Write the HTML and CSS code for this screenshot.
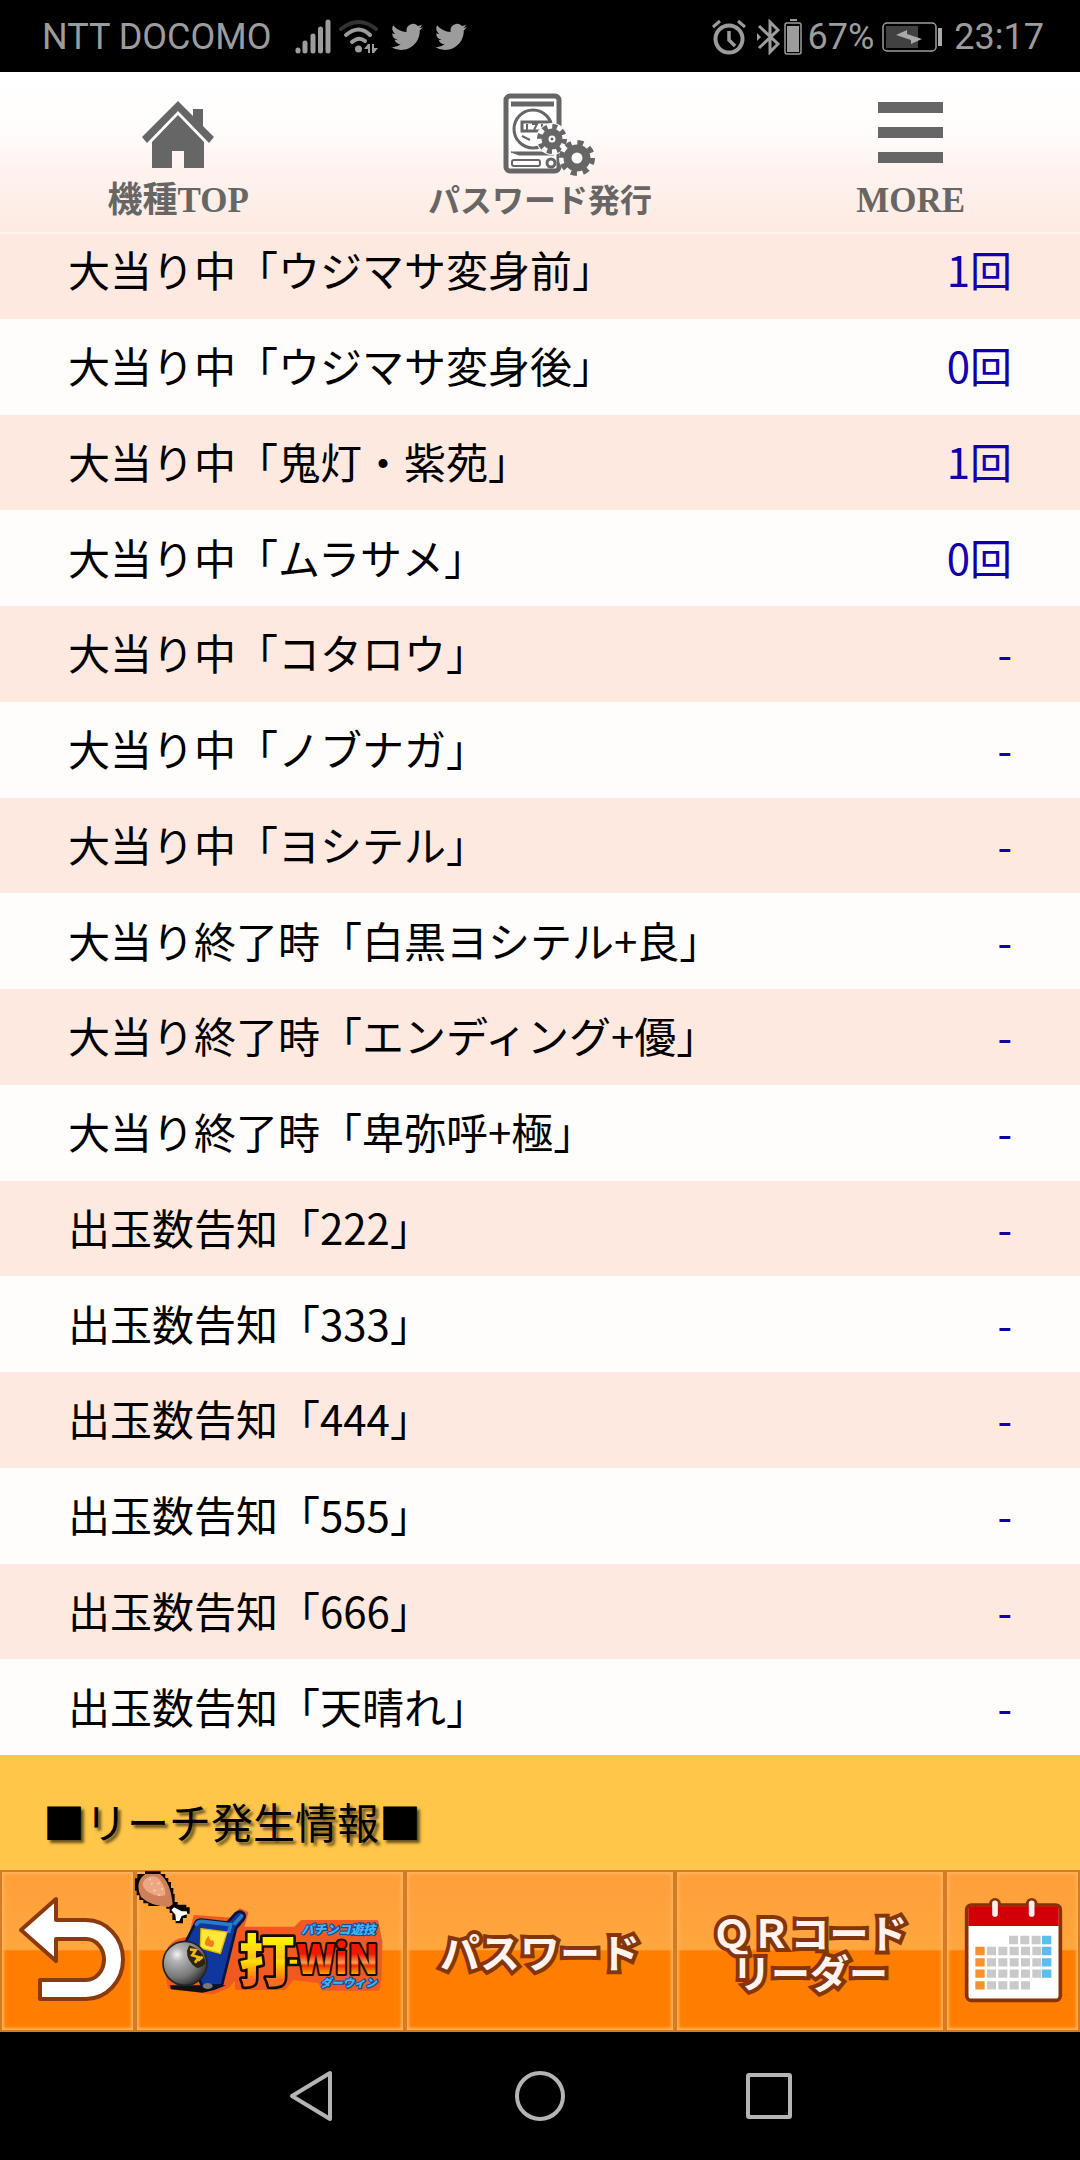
FILE: index.html
```html
<!DOCTYPE html>
<html lang="ja">
<head>
<meta charset="utf-8">
<meta name="viewport" content="width=device-width">
<title>打-WIN</title>
<link rel="stylesheet" href="styles.css">
</head>
<body>
<div class="status">
  <span class="carrier">NTT DOCOMO</span>
  <svg class="signal" width="36" height="36" viewBox="0 0 36 36" stroke="#9c9c9c" stroke-width="5" stroke-linecap="round"><path d="M3 31v1M10 24v8M18 17v15M25.500 10v22M33 3v29"/></svg>
  <svg class="wifi" width="40" height="36" viewBox="0 0 40 36" fill="none" stroke="#9c9c9c" stroke-width="4" stroke-linecap="round"><path stroke="#333" d="M2 10Q20-4 37 10"/><path d="M7 16Q20 5 31 16M13 23Q20 17 26 22"/><circle cx="19.500" cy="30" r="3.500" fill="#9c9c9c" stroke="none"/><path fill="#9c9c9c" stroke="none" d="M25 30l4-5h2v9h-2v-4zM33 25h2v4h4l-4 5h-2z"/></svg>
  <svg class="bird" width="32" height="28" viewBox="0 2 24 20" fill="#9c9c9c"><path d="M23.950 4.570a10 10 0 0 1-2.820.770 4.960 4.960 0 0 0 2.160-2.720c-.950.550-2 .950-3.130 1.180a4.920 4.920 0 0 0-8.380 4.480C7.690 8.090 4.070 6.130 1.640 3.160a4.920 4.920 0 0 0 1.520 6.570 4.900 4.900 0 0 1-2.230-.610v.060a4.920 4.920 0 0 0 3.950 4.830 5 5 0 0 1-2.210.080 4.940 4.940 0 0 0 4.600 3.420A9.870 9.870 0 0 1 0 19.540a13.990 13.990 0 0 0 7.550 2.210c9.050 0 14-7.500 14-13.980 0-.210 0-.420-.020-.630a9.940 9.940 0 0 0 2.460-2.550z"/></svg>
  <svg class="bird" width="32" height="28" viewBox="0 2 24 20" fill="#9c9c9c"><path d="M23.950 4.570a10 10 0 0 1-2.820.770 4.960 4.960 0 0 0 2.160-2.720c-.950.550-2 .950-3.130 1.180a4.920 4.920 0 0 0-8.380 4.480C7.690 8.090 4.070 6.130 1.640 3.160a4.920 4.920 0 0 0 1.520 6.570 4.900 4.900 0 0 1-2.230-.610v.060a4.920 4.920 0 0 0 3.950 4.830 5 5 0 0 1-2.210.080 4.940 4.940 0 0 0 4.600 3.420A9.870 9.870 0 0 1 0 19.540a13.990 13.990 0 0 0 7.550 2.210c9.050 0 14-7.500 14-13.980 0-.210 0-.420-.020-.630a9.940 9.940 0 0 0 2.460-2.550z"/></svg>
  <svg class="alarm" width="34" height="36" viewBox="0 0 34 36" fill="none" stroke="#9c9c9c" stroke-width="4"><circle cx="17" cy="20" r="13.500"/><path stroke-width="3" d="M1 8l7-6M33 8l-7-6"/><path stroke-width="3.500" d="M17 12v9l6 6"/></svg>
  <svg class="bluetooth" width="24" height="36" viewBox="0 0 24 36" fill="none" stroke="#9c9c9c" stroke-width="3"><path d="M3 7l19 18-8 8V3l8 8L3 29"/><path fill="#9c9c9c" stroke="none" d="M1 14l4 4-4 4z"/></svg>
  <svg class="cell" width="18" height="36" viewBox="0 0 18 36"><path fill="#9c9c9c" d="M6 0h7v2H6zM3 7h12v26H3z"/><rect x="1" y="4" width="16" height="31" rx="2" fill="none" stroke="#9c9c9c" stroke-width="1.500"/></svg>
  <span class="percent">67%</span>
  <svg class="battery" width="62" height="30" viewBox="0 0 62 30"><rect x="1" y="1" width="53" height="28" rx="4" fill="none" stroke="#9c9c9c" stroke-width="1.500"/><path fill="#414141" d="M4 4h32v22H4z"/><path fill="#aaa" d="M14 13l11-5v4l15 5-11 5v-4zM56 6h4v18h-4z"/></svg>
  <span>23:17</span>
</div>

<nav class="top-menu">
  <a href="#top">
    <svg width="72" height="84" viewBox="0 0 72 84" fill="#666"><path d="M0 44L36 8l15 15v-7h10v17l11 11-5 6-31-32L5 50z"/><path d="M10 49l26-27 26 27v26H42V58H30v17H10z"/></svg>
    <span>機種TOP</span>
  </a>
  <a class="issue" href="#password">
    <svg width="96" height="84" viewBox="0 0 96 84" fill="none" stroke="#666">
      <rect x="7" y="3" width="53" height="75" rx="4" fill="#fff" stroke-width="5"/>
      <path stroke-width="5" d="M12 11h43"/><circle cx="34" cy="36" r="19" stroke-width="3"/>
      <rect x="23" y="29" width="28" height="9" fill="#fff" stroke-width="3"/><path stroke-width="2" d="M28 31v6M33 31h5l-3 6M43 31v6M23 43l8 4"/>
      <path fill="#666" d="M12 59h43v3H20z"/><rect x="13" y="67" width="28" height="6" rx="2" stroke-width="2"/><circle cx="52" cy="70" r="4" stroke-width="3"/>
      <circle cx="53" cy="46" r="16" fill="#fdfafa" stroke="none"/><circle cx="53" cy="46" r="7" stroke-width="7"/><circle cx="53" cy="46" r="12.500" stroke-width="5" stroke-dasharray="4.900 4.900"/>
      <circle cx="78" cy="65" r="18" fill="#fdfafa" stroke="none"/><circle cx="78" cy="65" r="9.500" stroke-width="8"/><circle cx="78" cy="65" r="15.500" stroke-width="5" stroke-dasharray="6.080 6.080"/>
      <circle cx="53" cy="46" r="1.500" fill="#666" stroke="none"/>
    </svg>
    <span>パスワード発行</span>
  </a>
  <a class="more" href="#more">
    <svg width="66" height="84" viewBox="0 0 66 84" fill="#666"><path d="M0 9h65v11H0zM0 34h65v11H0zM0 59h65v11H0z"/></svg>
    <span>MORE</span>
  </a>
</nav>

<main>
  <table>
    <tbody>
      <tr><th scope="row">大当り中「ウジマサ変身前」</th><td>1回</td></tr>
      <tr><th scope="row">大当り中「ウジマサ変身後」</th><td>0回</td></tr>
      <tr><th scope="row">大当り中「鬼灯・紫苑」</th><td>1回</td></tr>
      <tr><th scope="row">大当り中「ムラサメ」</th><td>0回</td></tr>
      <tr><th scope="row">大当り中「コタロウ」</th><td>-</td></tr>
      <tr><th scope="row">大当り中「ノブナガ」</th><td>-</td></tr>
      <tr><th scope="row">大当り中「ヨシテル」</th><td>-</td></tr>
      <tr><th scope="row">大当り終了時「白黒ヨシテル+良」</th><td>-</td></tr>
      <tr><th scope="row">大当り終了時「エンディング+優」</th><td>-</td></tr>
      <tr><th scope="row">大当り終了時「卑弥呼+極」</th><td>-</td></tr>
      <tr><th scope="row">出玉数告知「222」</th><td>-</td></tr>
      <tr><th scope="row">出玉数告知「333」</th><td>-</td></tr>
      <tr><th scope="row">出玉数告知「444」</th><td>-</td></tr>
      <tr><th scope="row">出玉数告知「555」</th><td>-</td></tr>
      <tr><th scope="row">出玉数告知「666」</th><td>-</td></tr>
      <tr><th scope="row">出玉数告知「天晴れ」</th><td>-</td></tr>
    </tbody>
  </table>
  <h2>■リーチ発生情報■</h2>
</main>

<div class="toolbar">
  <button type="button" aria-label="戻る">
    <svg viewBox="0 0 135 162"><path d="M21 60L56 29v21h30a37 39.500 0 0 1 0 79H40v-19h46a18 20.500 0 0 0 0-41H56v22z" fill="#fff" stroke="#8a3a0c" stroke-width="4" stroke-linejoin="round"/></svg>
  </button>
  <button type="button" aria-label="打-WIN">
    <svg viewBox="45 30 810 486">
      <defs>
        <linearGradient id="gold" x2="0" y2="1"><stop offset=".3" stop-color="#fff200"/><stop offset=".52" stop-color="#ffc21a"/><stop offset=".56" stop-color="#ffe000"/><stop offset=".8" stop-color="#ff6a1a"/></linearGradient>
        <linearGradient id="win" x2="0" y2="1"><stop offset=".45" stop-color="#f01800"/><stop offset=".6" stop-color="#ff9a4a"/><stop offset=".65" stop-color="#f03000"/><stop offset=".85" stop-color="#ffd800"/></linearGradient>
        <radialGradient id="ball" cx=".32" cy=".3" r=".8"><stop stop-color="#f4f4f4"/><stop offset=".2" stop-color="#b4b4b4"/><stop offset=".65" stop-color="#777"/><stop offset="1" stop-color="#222"/></radialGradient>
      </defs>
      <g fill="#f05a20" stroke="#f05a20" stroke-width="10" stroke-linejoin="round"><path d="M225 170l110 8 25-28 20 10-18 60-4 120-35 40-45 18-130-16-8-48a70 70 0 0 1 70-98z"/><path d="M350 205h175l20-20h225l12 60-2 110-6 32H610l-12-22-80-10-25 30H350z"/></g>
      <path d="M150 376h168l-35 14-35 8-95-10z" fill="#111"/>
      <path d="M227 187q5-8 17-8l78 9 26-29q12-8 22 0 8 8 0 20l-22 26-42 170-60 3-50-130z" fill="#10389c" stroke="#06153f" stroke-width="8" stroke-linejoin="round"/>
      <path d="M229 193q5-10 17-9l86 10-5 20M345 190l20-22" fill="none" stroke="#2a7bc4" stroke-width="11" stroke-linecap="round"/>
      <path d="M243 206l78 10-20 64-60-16z" fill="#ffe83a" stroke="#e8b800" stroke-width="4"/><path d="M256 256q-4-16 10-28 2 10 8 14 6-4 8 4 2 10-6 16z" fill="#f78012"/>
      <circle cx="195" cy="310" r="66" fill="url(#ball)" stroke="#242424" stroke-width="5"/>
      <path d="M208 256q44 15 48 54-7 12-25 14-32-20-30-52z" fill="#2d2510"/><path d="M210 268l17 3-10 15 19 6-11 16M234 302l14-12" fill="none" stroke="#eebc16" stroke-width="8"/>
      <ellipse cx="263" cy="378" rx="15" ry="9" fill="#777"/>
      <path d="M505 295h30v20h-30z" fill="#ffd600" stroke="#111" stroke-width="8"/>
      <g class="logo-text">
        <text x="356" y="362" font-size="168" fill="url(#gold)" stroke-width="16">打</text>
        <text x="530" y="343" font-size="122" fill="url(#win)" stroke-width="12">WiN</text>
        <text class="logo-small" x="544" y="223" font-size="37">パチンコ遊技</text>
        <text class="logo-small" x="600" y="380" font-size="34">ダーウィン</text>
      </g>
      <path d="M75 34h47v8h14v12h9v12h8v18h7v18h4v24h9v8h26v8h10v19h-9v13h-11v16h-22v-10h-10v-21h-8v-13h-10v-8H85v-8H70v-10H58v-14h-8V92h-6V55h8V42h23z" fill="#080504"/>
      <path d="M76 42h44q32 25 38 91l-11 8q-55-2-84-30Q42 67 76 42z" fill="#cf8056"/><path d="M82 53q22-10 36 5 22 28 17 48-25 8-56-14-23-24 3-39z" fill="#eda782"/>
      <path d="M93 71h5M113 70h6M126 84v5M100 92h7M89 58h4M115 105h5" stroke="#ffd0b2" stroke-width="5"/>
      <path d="M154 150l8-8 23 12h15l2 9-17 5-7 15h-10l-2-19z" fill="#fff"/>
    </svg>
  </button>
  <button type="button"><span>パスワード</span></button>
  <button class="reader" type="button"><span>ＱＲコード<br>リーダー</span></button>
  <button type="button" aria-label="カレンダー">
    <svg viewBox="855 30 405 486">
      <path d="M1005 132v20M1115 132v20" stroke="#8a3205" stroke-width="36" stroke-linecap="round"/>
      <rect x="920" y="135" width="281" height="286" rx="14" fill="#fff" stroke="#8a3205" stroke-width="11"/>
      <path d="M925 198v-50q0-9 9-9h254q8 0 8 9v50z" fill="#d00006"/>
      <path d="M1005 130v32M1115 130v32" stroke="#fff0ed" stroke-width="17" stroke-linecap="round"/>
      <g fill="none" stroke-width="25"><path stroke="#c9c9c9" stroke-dasharray="27 7" d="M1047 240h95M981 273h163M981 307h163M981 341h163M981 376h129"/><path stroke="#f5922d" d="M946 273h28M946 307h28M946 341h28M946 376h28"/><path stroke="#58bdf0" d="M1146 240h28M1146 273h28M1146 307h28M1146 341h28"/></g>
    </svg>
  </button>
</div>

<div class="system-nav">
  <button type="button" aria-label="戻る"><svg width="50" height="54" viewBox="0 0 50 54"><path d="M6 27L44 4v46z"/></svg></button>
  <button type="button" aria-label="ホーム"><svg width="54" height="54" viewBox="0 0 54 54"><circle cx="27" cy="27" r="23"/></svg></button>
  <button type="button" aria-label="アプリ履歴"><svg width="50" height="54" viewBox="0 0 50 54"><rect x="4" y="6" width="42" height="42" rx="1"/></svg></button>
</div>
</body>
</html>
```
FILE: styles.css
```css
* { box-sizing: border-box; }

body {
  margin: 0;
  min-height: 100vh;
  display: flex;
  flex-direction: column;
  background: #fefdfb;
  color: #000;
  font-family: "Noto Sans CJK JP", sans-serif;
}

svg { display: block; flex: none; }

button {
  margin: 0;
  padding: 0;
  border: 0;
  background: none;
  font: inherit;
}

/* status bar */
.status {
  display: flex;
  align-items: center;
  height: 72px;
  padding: 2px 36px 0 42px;
  background: #000;
  color: #9c9c9c;
  font: 36px/70px Roboto, sans-serif;
}
.signal { margin-left: 24px; }
.wifi { margin-left: 8px; }
.bird { margin-left: 12px; }
.alarm { margin-left: auto; }
.bluetooth { margin-left: 10px; }
.cell { margin-left: 4px; }
.percent { margin-left: 6px; }
.battery { margin: 0 10px 0 8px; }

/* page menu */
.top-menu {
  position: relative;
  display: grid;
  grid-template-columns: 33% 34% 33%;
  height: 162px;
  padding-top: 21px;
  border-bottom: 2px solid #fff4ee;
  background: linear-gradient(#fff, #fffdfc 35%, #fff3ef 60%, #fdeae2);
}
.top-menu a {
  display: flex;
  flex-direction: column;
  align-items: center;
  color: #686664;
  font: bold 35px/48px "Liberation Serif", "Noto Sans CJK JP", serif;
  text-decoration: none;
}
.top-menu .issue { font-size: 32px; }
.top-menu .issue svg { margin-left: 14px; }
.top-menu .more { padding-left: 18px; }

/* results list */
main {
  flex: 1;
  display: flex;
  flex-direction: column;
  margin-top: -11px;
}
table {
  flex: 1;
  display: flex;
  font-size: 42px;
  line-height: 60px;
}
tbody {
  flex: 1;
  display: grid;
  grid-auto-rows: 1fr;
}
tr {
  display: flex;
  align-items: center;
  justify-content: space-between;
  padding: 0 68px 3px;
}
tr:nth-child(odd) { background: #fde9df; }
th { padding: 0; font-weight: 400; text-align: left; }
td { padding: 0; color: #1200a4; }

h2 {
  margin: 0;
  padding: 36px 43px 19px;
  background: #ffc649;
  font-size: 42px;
  font-weight: 400;
  line-height: 60px;
  text-shadow: 3px 3px 3px rgba(0, 0, 0, .6);
}

/* app toolbar */
.toolbar {
  display: grid;
  grid-template-columns: 1fr 2fr 2fr 2fr 1fr;
  height: 162px;
}
.toolbar button {
  display: flex;
  align-items: center;
  justify-content: center;
  background: linear-gradient(#ff9f3a, #ffa63e 49%, #ff7d00 50%, #ff7d00);
  box-shadow: inset 0 0 0 2px #d67b22, inset 0 0 3px 4px #ffb45c;
  color: #fff4ef;
  font-size: 40px;
  font-weight: 700;
  line-height: 40px;
}
.toolbar .reader { font-size: 39px; }
.toolbar span {
  -webkit-text-stroke: 8px #85350a;
  paint-order: stroke fill;
  stroke-linejoin: round;
}
.toolbar svg {
  width: 100%;
  height: 162px;
}
.logo-text {
  font-family: "Noto Sans CJK JP", sans-serif;
  font-weight: 900;
  stroke: #140c04;
  stroke-linejoin: round;
  paint-order: stroke fill;
}
.logo-small {
  fill: #45b4f4;
  stroke: #154d9c;
  stroke-width: 7px;
  font-style: italic;
}

/* system navigation */
.system-nav {
  display: flex;
  align-items: center;
  justify-content: center;
  gap: 177px;
  height: 128px;
  background: #000;
}
.system-nav svg {
  fill: none;
  stroke: #b4b4b4;
  stroke-width: 4px;
  stroke-linejoin: round;
}
```
